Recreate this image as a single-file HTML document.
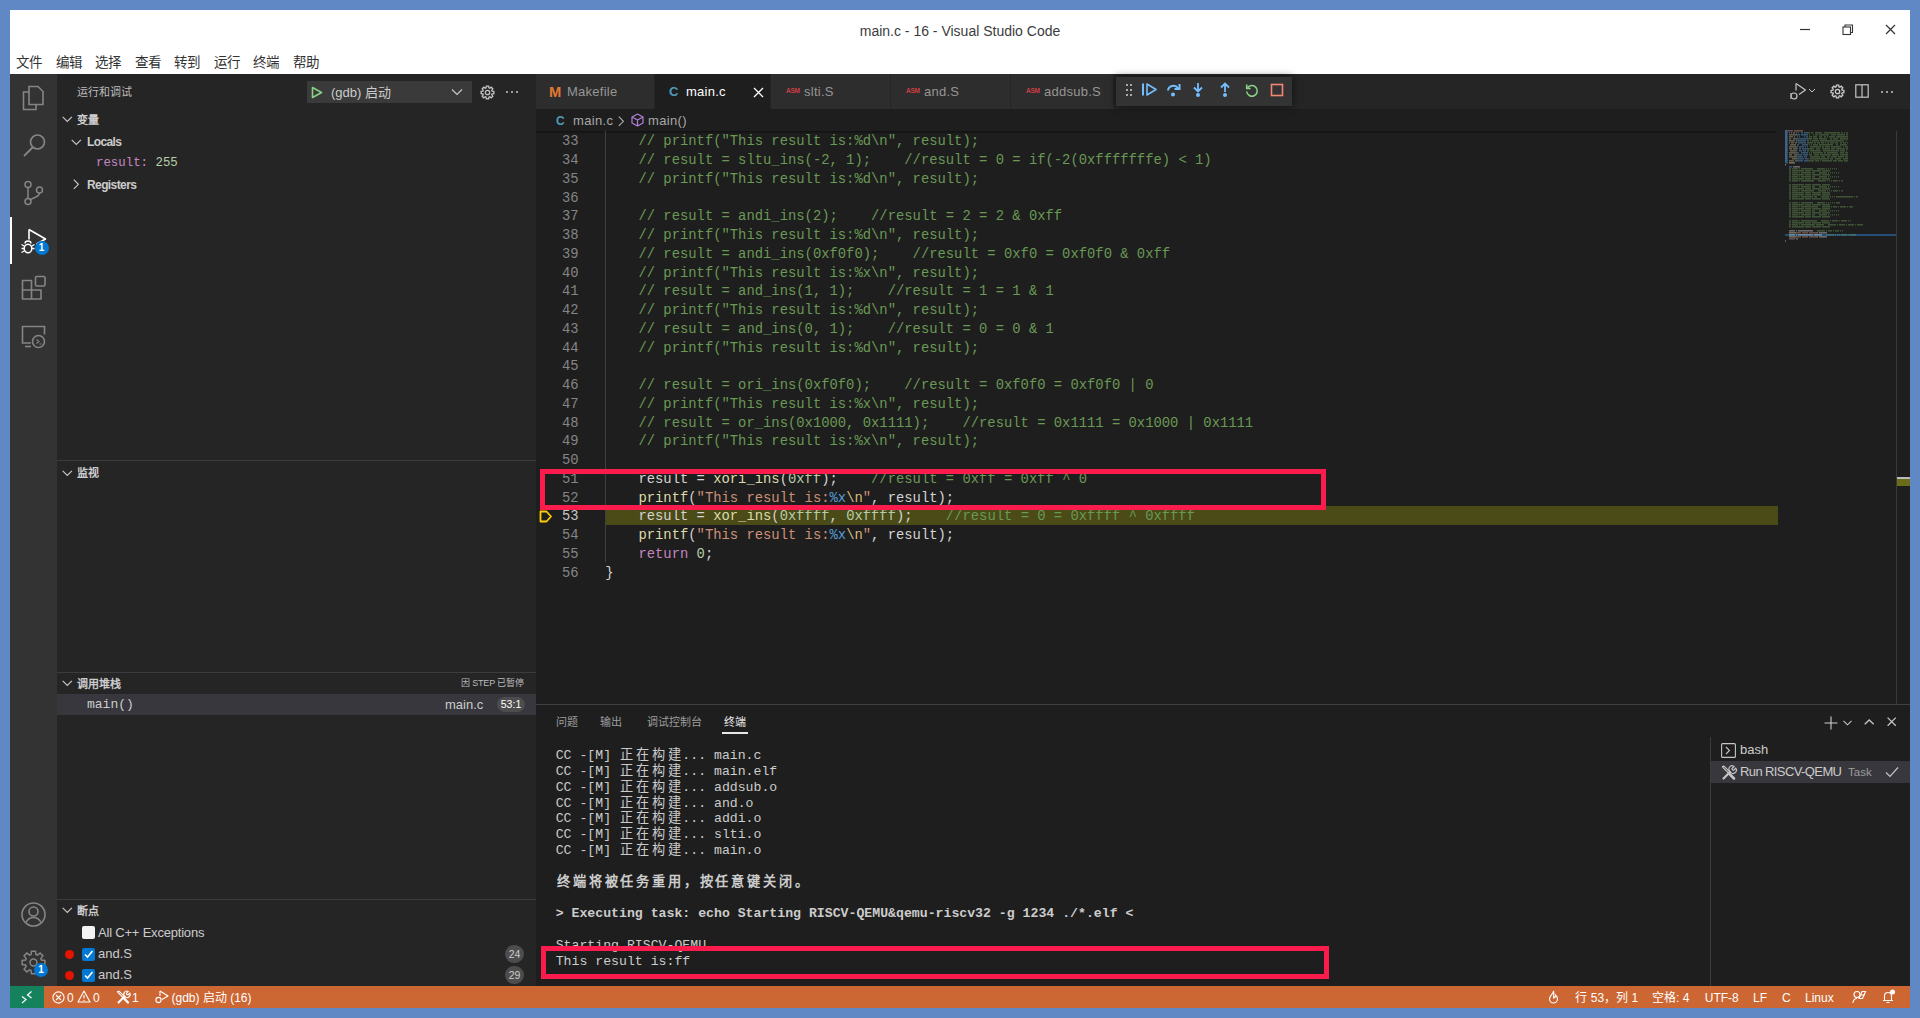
<!DOCTYPE html><html lang="zh-CN"><head><meta charset="utf-8"><title>vscode</title><style>
*{margin:0;padding:0;box-sizing:border-box}
html,body{width:1920px;height:1018px;overflow:hidden;background:#6088c4;font-family:"Liberation Sans",sans-serif;color:#ccc}
.a{position:absolute}
.t{position:absolute;white-space:pre}
.mono{font-family:"Liberation Mono",monospace}
svg{position:absolute;overflow:visible}
</style></head><body>
<div class="a" style="left:10px;top:10px;width:1900px;height:64px;background:#ffffff;"></div>
<div class="a" style="left:10px;top:74px;width:1900px;height:912px;background:#1e1e1e;"></div>
<div class="t" style="left:0px;top:23px;font-size:14px;line-height:16px;color:#3c3c3c;width:1920px;text-align:center;">main.c - 16 - Visual Studio Code</div>
<svg style="left:1799px;top:24px" width="14" height="14"><path d="M1 5.5h10" stroke="#333" stroke-width="1.2"/></svg>
<svg style="left:1842px;top:24px" width="14" height="14"><rect x="1" y="3" width="7.5" height="7.5" fill="none" stroke="#333" stroke-width="1.1"/><path d="M3 3V1h7.5v7.5H8.5" fill="none" stroke="#333" stroke-width="1.1"/></svg>
<svg style="left:1885px;top:24px" width="14" height="14"><path d="M1 1l9 9M10 1l-9 9" stroke="#333" stroke-width="1.2"/></svg>
<div class="t" style="left:16.0px;top:55px;font-size:13.5px;line-height:15px;color:#333;">文件</div>
<div class="t" style="left:55.5px;top:55px;font-size:13.5px;line-height:15px;color:#333;">编辑</div>
<div class="t" style="left:95.0px;top:55px;font-size:13.5px;line-height:15px;color:#333;">选择</div>
<div class="t" style="left:134.5px;top:55px;font-size:13.5px;line-height:15px;color:#333;">查看</div>
<div class="t" style="left:174.0px;top:55px;font-size:13.5px;line-height:15px;color:#333;">转到</div>
<div class="t" style="left:213.5px;top:55px;font-size:13.5px;line-height:15px;color:#333;">运行</div>
<div class="t" style="left:253.0px;top:55px;font-size:13.5px;line-height:15px;color:#333;">终端</div>
<div class="t" style="left:292.5px;top:55px;font-size:13.5px;line-height:15px;color:#333;">帮助</div>
<div class="a" style="left:10px;top:74px;width:47px;height:912px;background:#333333;"></div>
<div class="a" style="left:10px;top:217px;width:2px;height:47px;background:#ffffff;"></div>
<div class="a" style="left:57px;top:74px;width:479px;height:912px;background:#252526;"></div>
<div class="a" style="left:536px;top:74px;width:1374px;height:35px;background:#252526;"></div>
<svg style="left:21px;top:85px" width="24" height="26" viewBox="0 0 24 26"><path d="M8 1.5h9l5 5v13H8z" fill="none" stroke="#858585" stroke-width="1.6"/><path d="M8 7H2.5v17.5H15V19.5" fill="none" stroke="#858585" stroke-width="1.6"/></svg>
<svg style="left:22px;top:132px" width="24" height="26" viewBox="0 0 24 26"><circle cx="15.5" cy="10" r="7" fill="none" stroke="#858585" stroke-width="1.7"/><path d="M10.5 15.5L2 24" stroke="#858585" stroke-width="1.8"/></svg>
<svg style="left:22px;top:180px" width="24" height="26" viewBox="0 0 24 26"><circle cx="6" cy="4.5" r="3" fill="none" stroke="#858585" stroke-width="1.5"/><circle cx="6" cy="21.5" r="3" fill="none" stroke="#858585" stroke-width="1.5"/><circle cx="17.5" cy="10" r="3" fill="none" stroke="#858585" stroke-width="1.5"/><path d="M6 7.5v11M17.5 13c0 4-5 4-10 7" fill="none" stroke="#858585" stroke-width="1.5"/></svg>
<svg style="left:19px;top:228px" width="28" height="28" viewBox="0 0 28 28"><path d="M10 1.5l16.5 9.5-9 5" fill="none" stroke="#fff" stroke-width="1.6" stroke-linejoin="round"/><path d="M10 1.5v10" fill="none" stroke="#fff" stroke-width="1.6"/><ellipse cx="9" cy="20.5" rx="3.8" ry="4.3" fill="none" stroke="#fff" stroke-width="1.5"/><path d="M6 15.5a3 2.5 0 0 1 6 0" fill="none" stroke="#fff" stroke-width="1.4"/><path d="M2.5 16.5l2.7 1.5M2.5 20.5h2.7M2.5 24.5l2.7-1.5M15.5 16.5l-2.7 1.5M15.5 20.5h-2.7" stroke="#fff" stroke-width="1.3"/></svg>
<div class="a" style="left:34.5px;top:241px;width:14px;height:14px;border-radius:7px;background:#0078d4;color:#fff;font-size:10px;line-height:14px;text-align:center;font-weight:bold">1</div>
<svg style="left:21px;top:275px" width="26" height="26" viewBox="0 0 26 26"><path d="M1.5 5.5h9v9.5h9.5v9H1.5z M1.5 15h9v9" fill="none" stroke="#858585" stroke-width="1.6" stroke-linejoin="round"/><rect x="14.5" y="1.5" width="9.5" height="9.5" rx="1.2" fill="none" stroke="#858585" stroke-width="1.6"/></svg>
<svg style="left:21px;top:324px" width="26" height="26" viewBox="0 0 26 26"><path d="M10 19H1.5V2.5h22v8" fill="none" stroke="#858585" stroke-width="1.6"/><path d="M4 22.5h6" stroke="#858585" stroke-width="1.6"/><circle cx="17.5" cy="17.5" r="6" fill="none" stroke="#858585" stroke-width="1.6"/><path d="M15.5 15.5l2.5 2-2.5 2M18.5 20h2" fill="none" stroke="#858585" stroke-width="1.1"/></svg>
<svg style="left:21px;top:902px" width="26" height="26" viewBox="0 0 26 26"><circle cx="12.5" cy="12.5" r="11.5" fill="none" stroke="#858585" stroke-width="1.6"/><circle cx="12.5" cy="9.5" r="4.5" fill="none" stroke="#858585" stroke-width="1.6"/><path d="M5 20.5c2-4 5-5 7.5-5s5.5 1 7.5 5" fill="none" stroke="#858585" stroke-width="1.6"/></svg>
<svg style="left:21.5px;top:950.5px" width="23" height="23"><path d="M22.82 9.48L22.82 13.52L19.42 13.90L18.80 15.40L20.93 18.08L18.08 20.93L15.40 18.80L13.90 19.42L13.52 22.82L9.48 22.82L9.10 19.42L7.60 18.80L4.92 20.93L2.07 18.08L4.20 15.40L3.58 13.90L0.18 13.52L0.18 9.48L3.58 9.10L4.20 7.60L2.07 4.92L4.92 2.07L7.60 4.20L9.10 3.58L9.48 0.18L13.52 0.18L13.90 3.58L15.40 4.20L18.08 2.07L20.93 4.92L18.80 7.60L19.42 9.10Z" fill="none" stroke="#858585" stroke-width="1.5" stroke-linejoin="miter"/><circle cx="11.5" cy="11.5" r="3.45" fill="none" stroke="#858585" stroke-width="1.5"/></svg>
<div class="a" style="left:34px;top:963px;width:14px;height:14px;border-radius:7px;background:#0078d4;color:#fff;font-size:10px;line-height:14px;text-align:center;font-weight:bold">1</div>
<div class="t" style="left:77px;top:86px;font-size:11px;line-height:13px;color:#bbbbbb;">运行和调试</div>
<div class="a" style="left:307px;top:81px;width:165px;height:22px;background:#3a3a3a;"></div>
<svg style="left:311px;top:86px" width="12" height="13"><path d="M1.5 1.5l9 5-9 5z" fill="none" stroke="#89d185" stroke-width="1.6" stroke-linejoin="round"/></svg>
<div class="t" style="left:331px;top:84.6px;font-size:13px;line-height:16px;color:#cccccc;">(gdb) 启动</div>
<svg style="left:451px;top:88px" width="12" height="8"><path d="M1 1.5l5 5 5-5" fill="none" stroke="#c5c5c5" stroke-width="1.2"/></svg>
<svg style="left:480.5px;top:85.5px" width="13" height="13"><path d="M12.90 5.36L12.90 7.64L11.10 7.90L10.74 8.77L11.83 10.22L10.22 11.83L8.77 10.74L7.90 11.10L7.64 12.90L5.36 12.90L5.10 11.10L4.23 10.74L2.78 11.83L1.17 10.22L2.26 8.77L1.90 7.90L0.10 7.64L0.10 5.36L1.90 5.10L2.26 4.23L1.17 2.78L2.78 1.17L4.23 2.26L5.10 1.90L5.36 0.10L7.64 0.10L7.90 1.90L8.77 2.26L10.22 1.17L11.83 2.78L10.74 4.23L11.10 5.10Z" fill="none" stroke="#c5c5c5" stroke-width="1.3" stroke-linejoin="miter"/><circle cx="6.5" cy="6.5" r="2.21" fill="none" stroke="#c5c5c5" stroke-width="1.3"/></svg>
<div class="a" style="left:506px;top:91px;width:2px;height:2px;background:#c5c5c5;border-radius:1px"></div>
<div class="a" style="left:511px;top:91px;width:2px;height:2px;background:#c5c5c5;border-radius:1px"></div>
<div class="a" style="left:516px;top:91px;width:2px;height:2px;background:#c5c5c5;border-radius:1px"></div>
<svg style="left:62px;top:116px" width="11" height="7"><path d="M0.7 0.8l4.6 4.6 4.6-4.6" fill="none" stroke="#c5c5c5" stroke-width="1.2"/></svg>
<div class="t" style="left:77px;top:114px;font-size:11px;line-height:13px;color:#cccccc;font-weight:bold">变量</div>
<svg style="left:71px;top:139px" width="11" height="7"><path d="M0.7 0.8l4.6 4.6 4.6-4.6" fill="none" stroke="#c5c5c5" stroke-width="1.2"/></svg>
<div class="t" style="left:87px;top:134.6px;font-size:12px;line-height:14px;color:#cccccc;font-weight:bold;letter-spacing:-0.6px">Locals</div>
<div class="t mono" style="left:96px;top:155.6px;font-size:12.4px;line-height:15px;color:#cccccc;"><span style="color:#c586c0">result:</span> <span style="color:#b5cea8">255</span></div>
<svg style="left:73px;top:179px" width="7" height="11"><path d="M0.8 0.7l4.6 4.6-4.6 4.6" fill="none" stroke="#c5c5c5" stroke-width="1.2"/></svg>
<div class="t" style="left:87px;top:177.6px;font-size:12px;line-height:15px;color:#cccccc;font-weight:bold;letter-spacing:-0.6px">Registers</div>
<div class="a" style="left:57px;top:460px;width:479px;height:1px;background:#3c3c3c;"></div>
<svg style="left:62px;top:470px" width="11" height="7"><path d="M0.7 0.8l4.6 4.6 4.6-4.6" fill="none" stroke="#c5c5c5" stroke-width="1.2"/></svg>
<div class="t" style="left:77px;top:466.5px;font-size:11px;line-height:13px;color:#cccccc;font-weight:bold">监视</div>
<div class="a" style="left:57px;top:672px;width:479px;height:1px;background:#3c3c3c;"></div>
<svg style="left:62px;top:680px" width="11" height="7"><path d="M0.7 0.8l4.6 4.6 4.6-4.6" fill="none" stroke="#c5c5c5" stroke-width="1.2"/></svg>
<div class="t" style="left:77px;top:678px;font-size:11px;line-height:13px;color:#cccccc;font-weight:bold">调用堆栈</div>
<div class="t" style="left:400px;top:677px;font-size:9px;line-height:12px;color:#bbbbbb;width:123.5px;text-align:right;letter-spacing:-0.2px">因 STEP 已暂停</div>
<div class="a" style="left:57px;top:694px;width:479px;height:21px;background:#37373d;"></div>
<div class="t mono" style="left:87px;top:697px;font-size:13px;line-height:15px;color:#cccccc;">main()</div>
<div class="t" style="left:445px;top:697px;font-size:13px;line-height:15px;color:#cccccc;">main.c</div>
<div class="a" style="left:497px;top:697px;width:28px;height:15px;background:#4d4d4d;border-radius:8px"></div>
<div class="t" style="left:497px;top:698px;font-size:10.5px;line-height:13px;color:#fff;width:28px;text-align:center;">53:1</div>
<div class="a" style="left:57px;top:899px;width:479px;height:1px;background:#3c3c3c;"></div>
<svg style="left:62px;top:907px" width="11" height="7"><path d="M0.7 0.8l4.6 4.6 4.6-4.6" fill="none" stroke="#c5c5c5" stroke-width="1.2"/></svg>
<div class="t" style="left:77px;top:905px;font-size:11px;line-height:13px;color:#cccccc;font-weight:bold">断点</div>
<div class="a" style="left:82px;top:926px;width:13px;height:13px;background:#f3f3f3;border-radius:2px"></div>
<div class="t" style="left:98px;top:925px;font-size:13px;line-height:15px;color:#cccccc;letter-spacing:-0.2px">All C++ Exceptions</div>
<div class="a" style="left:65px;top:950px;width:9px;height:9px;background:#e51400;border-radius:5px"></div>
<div class="a" style="left:82px;top:948px;width:13px;height:13px;background:#0078d4;border-radius:2px"></div>
<svg style="left:83px;top:949px" width="11" height="11"><path d="M2 5.5l2.5 2.5 5-6" fill="none" stroke="#fff" stroke-width="1.6"/></svg>
<div class="t" style="left:98px;top:946px;font-size:13px;line-height:16px;color:#cccccc;">and.S</div>
<div class="a" style="left:505px;top:945px;width:19px;height:18px;background:#4d4d4d;border-radius:9px"></div>
<div class="t" style="left:505px;top:947px;font-size:10.5px;line-height:14px;color:#ccc;width:19px;text-align:center;">24</div>
<div class="a" style="left:65px;top:971px;width:9px;height:9px;background:#e51400;border-radius:5px"></div>
<div class="a" style="left:82px;top:969px;width:13px;height:13px;background:#0078d4;border-radius:2px"></div>
<svg style="left:83px;top:970px" width="11" height="11"><path d="M2 5.5l2.5 2.5 5-6" fill="none" stroke="#fff" stroke-width="1.6"/></svg>
<div class="t" style="left:98px;top:967px;font-size:13px;line-height:16px;color:#cccccc;">and.S</div>
<div class="a" style="left:505px;top:966px;width:19px;height:18px;background:#4d4d4d;border-radius:9px"></div>
<div class="t" style="left:505px;top:968px;font-size:10.5px;line-height:14px;color:#ccc;width:19px;text-align:center;">29</div>
<div class="a" style="left:536px;top:74px;width:118px;height:35px;background:#2d2d2d;"></div>
<div class="t" style="left:548.5px;top:84.5px;font-size:14px;line-height:14px;color:#e37933;font-weight:bold;transform:scaleX(1.05);transform-origin:left">M</div>
<div class="t" style="left:567px;top:84px;font-size:13px;line-height:16px;color:#969696;letter-spacing:0.25px">Makefile</div>
<div class="a" style="left:655px;top:74px;width:115px;height:35px;background:#1e1e1e;"></div>
<div class="t" style="left:669px;top:84.8px;font-size:13px;line-height:14px;color:#519aba;font-weight:bold">C</div>
<div class="t" style="left:686px;top:84px;font-size:13px;line-height:16px;color:#ffffff;letter-spacing:0.25px">main.c</div>
<div class="a" style="left:771px;top:74px;width:119px;height:35px;background:#2d2d2d;"></div>
<div class="t" style="left:786px;top:87px;font-size:6.5px;line-height:8px;color:#cc3e44;font-weight:bold;letter-spacing:-0.3px">ASM</div>
<div class="t" style="left:804px;top:84px;font-size:13px;line-height:16px;color:#969696;letter-spacing:0.25px">slti.S</div>
<div class="a" style="left:891px;top:74px;width:119px;height:35px;background:#2d2d2d;"></div>
<div class="t" style="left:906px;top:87px;font-size:6.5px;line-height:8px;color:#cc3e44;font-weight:bold;letter-spacing:-0.3px">ASM</div>
<div class="t" style="left:924px;top:84px;font-size:13px;line-height:16px;color:#969696;letter-spacing:0.25px">and.S</div>
<div class="a" style="left:1011px;top:74px;width:102px;height:35px;background:#2d2d2d;"></div>
<div class="t" style="left:1026px;top:87px;font-size:6.5px;line-height:8px;color:#cc3e44;font-weight:bold;letter-spacing:-0.3px">ASM</div>
<div class="t" style="left:1044px;top:84px;font-size:13px;line-height:16px;color:#969696;letter-spacing:0.25px">addsub.S</div>
<svg style="left:752.5px;top:86.5px" width="12" height="12"><path d="M1 1l9 9M10 1L1 10" stroke="#fff" stroke-width="1.3"/></svg>
<div class="a" style="left:1116px;top:77px;width:176px;height:29px;background:#333333;box-shadow:0 0 8px rgba(0,0,0,0.6)"></div>
<div class="a" style="left:1126px;top:84px;width:2px;height:2px;background:#aaa;"></div>
<div class="a" style="left:1130px;top:84px;width:2px;height:2px;background:#aaa;"></div>
<div class="a" style="left:1126px;top:89px;width:2px;height:2px;background:#aaa;"></div>
<div class="a" style="left:1130px;top:89px;width:2px;height:2px;background:#aaa;"></div>
<div class="a" style="left:1126px;top:94px;width:2px;height:2px;background:#aaa;"></div>
<div class="a" style="left:1130px;top:94px;width:2px;height:2px;background:#aaa;"></div>
<svg style="left:1141px;top:82px" width="18" height="16"><path d="M2 1.5v12" stroke="#75beff" stroke-width="2"/><path d="M6 2l9 5.5-9 5.5z" fill="none" stroke="#75beff" stroke-width="1.6" stroke-linejoin="round"/></svg>
<svg style="left:1166px;top:82px" width="16" height="16"><path d="M2 8.5a5.5 5 0 0 1 10-2.5" fill="none" stroke="#75beff" stroke-width="2"/><path d="M13.5 2v5h-5" fill="none" stroke="#75beff" stroke-width="2"/><circle cx="7" cy="12.5" r="2" fill="#75beff"/></svg>
<svg style="left:1191px;top:82px" width="14" height="16"><path d="M7 1v8M3 5.5l4 4 4-4" fill="none" stroke="#75beff" stroke-width="1.8"/><circle cx="7" cy="13" r="2" fill="#75beff"/></svg>
<svg style="left:1218px;top:82px" width="14" height="16"><path d="M7 10V2M3 5.5l4-4 4 4" fill="none" stroke="#75beff" stroke-width="1.8"/><circle cx="7" cy="13" r="2" fill="#75beff"/></svg>
<svg style="left:1244px;top:83px" width="16" height="16"><path d="M3.5 5A5.3 5.3 0 1 1 2.7 8.5" fill="none" stroke="#89d185" stroke-width="1.6"/><path d="M2.7 1.5v4h4" fill="none" stroke="#89d185" stroke-width="1.6"/></svg>
<svg style="left:1270px;top:83px" width="14" height="14"><rect x="1.5" y="1.5" width="11" height="11" fill="none" stroke="#f48771" stroke-width="1.6"/></svg>
<svg style="left:1789px;top:82px" width="30" height="20"><path d="M7 1.5l9.5 6.5-6.5 4.5" fill="none" stroke="#c5c5c5" stroke-width="1.2" stroke-linejoin="round"/><path d="M7 1.5v7" stroke="#c5c5c5" stroke-width="1.2"/><circle cx="5" cy="14" r="3" fill="none" stroke="#c5c5c5" stroke-width="1.2"/><path d="M1 11.5l2 1M1 14h1.5M1 16.5l2-1" stroke="#c5c5c5" stroke-width="1"/><path d="M20 7l3 3 3-3" fill="none" stroke="#c5c5c5" stroke-width="1"/></svg>
<svg style="left:1830.5px;top:84.5px" width="13" height="13"><path d="M12.90 5.36L12.90 7.64L11.10 7.90L10.74 8.77L11.83 10.22L10.22 11.83L8.77 10.74L7.90 11.10L7.64 12.90L5.36 12.90L5.10 11.10L4.23 10.74L2.78 11.83L1.17 10.22L2.26 8.77L1.90 7.90L0.10 7.64L0.10 5.36L1.90 5.10L2.26 4.23L1.17 2.78L2.78 1.17L4.23 2.26L5.10 1.90L5.36 0.10L7.64 0.10L7.90 1.90L8.77 2.26L10.22 1.17L11.83 2.78L10.74 4.23L11.10 5.10Z" fill="none" stroke="#cccccc" stroke-width="1.3" stroke-linejoin="miter"/><circle cx="6.5" cy="6.5" r="2.21" fill="none" stroke="#cccccc" stroke-width="1.3"/></svg>
<svg style="left:1855px;top:84px" width="14" height="14"><rect x="0.8" y="0.8" width="12.4" height="12.4" fill="none" stroke="#c5c5c5" stroke-width="1.2"/><path d="M7 1v12" stroke="#c5c5c5" stroke-width="1.2"/></svg>
<div class="a" style="left:1881px;top:91px;width:2px;height:2px;background:#c5c5c5;border-radius:1px"></div>
<div class="a" style="left:1886px;top:91px;width:2px;height:2px;background:#c5c5c5;border-radius:1px"></div>
<div class="a" style="left:1891px;top:91px;width:2px;height:2px;background:#c5c5c5;border-radius:1px"></div>
<div class="t" style="left:556px;top:113.5px;font-size:12px;line-height:14px;color:#519aba;font-weight:bold">C</div>
<div class="t" style="left:573px;top:112.5px;font-size:13px;line-height:16px;color:#a9a9a9;letter-spacing:0.35px">main.c</div>
<svg style="left:618px;top:115.5px" width="7" height="11"><path d="M0.8 0.7l4.6 4.6-4.6 4.6" fill="none" stroke="#a9a9a9" stroke-width="1.2"/></svg>
<svg style="left:631px;top:113px" width="14" height="14"><path d="M6.5 1l5.5 3v6l-5.5 3L1 10V4z M1 4l5.5 3 5.5-3 M6.5 7v6" fill="none" stroke="#b180d7" stroke-width="1.2" stroke-linejoin="round"/></svg>
<div class="t" style="left:648px;top:112.5px;font-size:13px;line-height:16px;color:#a9a9a9;letter-spacing:0.35px">main()</div>
<div class="a" style="left:536px;top:131px;width:1240px;height:3px;background:linear-gradient(rgba(0,0,0,0.45),rgba(0,0,0,0));"></div>
<div class="a" style="left:605px;top:506.0px;width:1173px;height:18.75px;background:#4b4b18;"></div>
<div class="a" style="left:605px;top:131px;width:1px;height:431.25px;background:#404040;"></div>
<div class="t mono" style="left:540px;top:132.25px;width:38.5px;text-align:right;font-size:13.85px;line-height:18.75px;color:#858585">33</div>
<div class="t mono" style="left:605.2px;top:132.25px;font-size:13.85px;line-height:18.75px;color:#d4d4d4"><span style="color:#6a9955">    // printf(&quot;This result is:%d\n&quot;, result);</span></div>
<div class="t mono" style="left:540px;top:151.0px;width:38.5px;text-align:right;font-size:13.85px;line-height:18.75px;color:#858585">34</div>
<div class="t mono" style="left:605.2px;top:151.0px;font-size:13.85px;line-height:18.75px;color:#d4d4d4"><span style="color:#6a9955">    // result = sltu_ins(-2, 1);    //result = 0 = if(-2(0xfffffffe) &lt; 1)</span></div>
<div class="t mono" style="left:540px;top:169.75px;width:38.5px;text-align:right;font-size:13.85px;line-height:18.75px;color:#858585">35</div>
<div class="t mono" style="left:605.2px;top:169.75px;font-size:13.85px;line-height:18.75px;color:#d4d4d4"><span style="color:#6a9955">    // printf(&quot;This result is:%d\n&quot;, result);</span></div>
<div class="t mono" style="left:540px;top:188.5px;width:38.5px;text-align:right;font-size:13.85px;line-height:18.75px;color:#858585">36</div>
<div class="t mono" style="left:540px;top:207.25px;width:38.5px;text-align:right;font-size:13.85px;line-height:18.75px;color:#858585">37</div>
<div class="t mono" style="left:605.2px;top:207.25px;font-size:13.85px;line-height:18.75px;color:#d4d4d4"><span style="color:#6a9955">    // result = andi_ins(2);    //result = 2 = 2 &amp; 0xff</span></div>
<div class="t mono" style="left:540px;top:226.0px;width:38.5px;text-align:right;font-size:13.85px;line-height:18.75px;color:#858585">38</div>
<div class="t mono" style="left:605.2px;top:226.0px;font-size:13.85px;line-height:18.75px;color:#d4d4d4"><span style="color:#6a9955">    // printf(&quot;This result is:%d\n&quot;, result);</span></div>
<div class="t mono" style="left:540px;top:244.75px;width:38.5px;text-align:right;font-size:13.85px;line-height:18.75px;color:#858585">39</div>
<div class="t mono" style="left:605.2px;top:244.75px;font-size:13.85px;line-height:18.75px;color:#d4d4d4"><span style="color:#6a9955">    // result = andi_ins(0xf0f0);    //result = 0xf0 = 0xf0f0 &amp; 0xff</span></div>
<div class="t mono" style="left:540px;top:263.5px;width:38.5px;text-align:right;font-size:13.85px;line-height:18.75px;color:#858585">40</div>
<div class="t mono" style="left:605.2px;top:263.5px;font-size:13.85px;line-height:18.75px;color:#d4d4d4"><span style="color:#6a9955">    // printf(&quot;This result is:%x\n&quot;, result);</span></div>
<div class="t mono" style="left:540px;top:282.25px;width:38.5px;text-align:right;font-size:13.85px;line-height:18.75px;color:#858585">41</div>
<div class="t mono" style="left:605.2px;top:282.25px;font-size:13.85px;line-height:18.75px;color:#d4d4d4"><span style="color:#6a9955">    // result = and_ins(1, 1);    //result = 1 = 1 &amp; 1</span></div>
<div class="t mono" style="left:540px;top:301.0px;width:38.5px;text-align:right;font-size:13.85px;line-height:18.75px;color:#858585">42</div>
<div class="t mono" style="left:605.2px;top:301.0px;font-size:13.85px;line-height:18.75px;color:#d4d4d4"><span style="color:#6a9955">    // printf(&quot;This result is:%d\n&quot;, result);</span></div>
<div class="t mono" style="left:540px;top:319.75px;width:38.5px;text-align:right;font-size:13.85px;line-height:18.75px;color:#858585">43</div>
<div class="t mono" style="left:605.2px;top:319.75px;font-size:13.85px;line-height:18.75px;color:#d4d4d4"><span style="color:#6a9955">    // result = and_ins(0, 1);    //result = 0 = 0 &amp; 1</span></div>
<div class="t mono" style="left:540px;top:338.5px;width:38.5px;text-align:right;font-size:13.85px;line-height:18.75px;color:#858585">44</div>
<div class="t mono" style="left:605.2px;top:338.5px;font-size:13.85px;line-height:18.75px;color:#d4d4d4"><span style="color:#6a9955">    // printf(&quot;This result is:%d\n&quot;, result);</span></div>
<div class="t mono" style="left:540px;top:357.25px;width:38.5px;text-align:right;font-size:13.85px;line-height:18.75px;color:#858585">45</div>
<div class="t mono" style="left:540px;top:376.0px;width:38.5px;text-align:right;font-size:13.85px;line-height:18.75px;color:#858585">46</div>
<div class="t mono" style="left:605.2px;top:376.0px;font-size:13.85px;line-height:18.75px;color:#d4d4d4"><span style="color:#6a9955">    // result = ori_ins(0xf0f0);    //result = 0xf0f0 = 0xf0f0 | 0</span></div>
<div class="t mono" style="left:540px;top:394.75px;width:38.5px;text-align:right;font-size:13.85px;line-height:18.75px;color:#858585">47</div>
<div class="t mono" style="left:605.2px;top:394.75px;font-size:13.85px;line-height:18.75px;color:#d4d4d4"><span style="color:#6a9955">    // printf(&quot;This result is:%x\n&quot;, result);</span></div>
<div class="t mono" style="left:540px;top:413.5px;width:38.5px;text-align:right;font-size:13.85px;line-height:18.75px;color:#858585">48</div>
<div class="t mono" style="left:605.2px;top:413.5px;font-size:13.85px;line-height:18.75px;color:#d4d4d4"><span style="color:#6a9955">    // result = or_ins(0x1000, 0x1111);    //result = 0x1111 = 0x1000 | 0x1111</span></div>
<div class="t mono" style="left:540px;top:432.25px;width:38.5px;text-align:right;font-size:13.85px;line-height:18.75px;color:#858585">49</div>
<div class="t mono" style="left:605.2px;top:432.25px;font-size:13.85px;line-height:18.75px;color:#d4d4d4"><span style="color:#6a9955">    // printf(&quot;This result is:%x\n&quot;, result);</span></div>
<div class="t mono" style="left:540px;top:451.0px;width:38.5px;text-align:right;font-size:13.85px;line-height:18.75px;color:#858585">50</div>
<div class="t mono" style="left:540px;top:469.75px;width:38.5px;text-align:right;font-size:13.85px;line-height:18.75px;color:#858585">51</div>
<div class="t mono" style="left:605.2px;top:469.75px;font-size:13.85px;line-height:18.75px;color:#d4d4d4"><span style="color:#d4d4d4">    result = </span><span style="color:#dcdcaa">xori_ins</span><span style="color:#d4d4d4">(</span><span style="color:#b5cea8">0xff</span><span style="color:#d4d4d4">);    </span><span style="color:#6a9955">//result = 0xff = 0xff ^ 0</span></div>
<div class="t mono" style="left:540px;top:488.5px;width:38.5px;text-align:right;font-size:13.85px;line-height:18.75px;color:#858585">52</div>
<div class="t mono" style="left:605.2px;top:488.5px;font-size:13.85px;line-height:18.75px;color:#d4d4d4"><span style="color:#d4d4d4">    </span><span style="color:#dcdcaa">printf</span><span style="color:#d4d4d4">(</span><span style="color:#ce9178">&quot;This result is:</span><span style="color:#569cd6">%x</span><span style="color:#d7ba7d">\n</span><span style="color:#ce9178">&quot;</span><span style="color:#d4d4d4">, result);</span></div>
<div class="t mono" style="left:540px;top:507.25px;width:38.5px;text-align:right;font-size:13.85px;line-height:18.75px;color:#c6c6c6">53</div>
<div class="t mono" style="left:605.2px;top:507.25px;font-size:13.85px;line-height:18.75px;color:#d4d4d4"><span style="color:#d4d4d4">    result = </span><span style="color:#dcdcaa">xor_ins</span><span style="color:#d4d4d4">(</span><span style="color:#b5cea8">0xffff</span><span style="color:#d4d4d4">, </span><span style="color:#b5cea8">0xffff</span><span style="color:#d4d4d4">);    </span><span style="color:#6a9955">//result = 0 = 0xffff ^ 0xffff</span></div>
<div class="t mono" style="left:540px;top:526.0px;width:38.5px;text-align:right;font-size:13.85px;line-height:18.75px;color:#858585">54</div>
<div class="t mono" style="left:605.2px;top:526.0px;font-size:13.85px;line-height:18.75px;color:#d4d4d4"><span style="color:#d4d4d4">    </span><span style="color:#dcdcaa">printf</span><span style="color:#d4d4d4">(</span><span style="color:#ce9178">&quot;This result is:</span><span style="color:#569cd6">%x</span><span style="color:#d7ba7d">\n</span><span style="color:#ce9178">&quot;</span><span style="color:#d4d4d4">, result);</span></div>
<div class="t mono" style="left:540px;top:544.75px;width:38.5px;text-align:right;font-size:13.85px;line-height:18.75px;color:#858585">55</div>
<div class="t mono" style="left:605.2px;top:544.75px;font-size:13.85px;line-height:18.75px;color:#d4d4d4"><span style="color:#d4d4d4">    </span><span style="color:#c586c0">return</span><span style="color:#d4d4d4"> </span><span style="color:#b5cea8">0</span><span style="color:#d4d4d4">;</span></div>
<div class="t mono" style="left:540px;top:563.5px;width:38.5px;text-align:right;font-size:13.85px;line-height:18.75px;color:#858585">56</div>
<div class="t mono" style="left:605.2px;top:563.5px;font-size:13.85px;line-height:18.75px;color:#d4d4d4"><span style="color:#d4d4d4">}</span></div>
<svg style="left:539px;top:510.0px" width="14" height="13"><path d="M1.5 1.5h6l4.5 5-4.5 5h-6z" fill="none" stroke="#ffcc00" stroke-width="1.8" stroke-linejoin="round"/></svg>
<div class="a" style="left:1896px;top:131px;width:1px;height:573px;background:#3a3a3a;"></div>
<div class="a" style="left:1897px;top:477px;width:13px;height:2px;background:#bbbbbb;"></div>
<div class="a" style="left:1897px;top:479px;width:13px;height:7px;background:#6b6b1a;"></div>
<div class="a" style="left:1785px;top:233.5px;width:111px;height:2.5px;background:#264f78"></div>
<svg style="left:1785px;top:130px;opacity:0.42" width="112" height="120"><rect x="0" y="0" width="8" height="1.6" fill="#c586c0"/><rect x="9" y="0" width="9" height="1.6" fill="#ce9178"/><rect x="0" y="2" width="3" height="1.6" fill="#569cd6"/><rect x="4" y="2" width="1" height="1.6" fill="#b8b088"/><rect x="6" y="2" width="1" height="1.6" fill="#b8b088"/><rect x="8" y="2" width="2" height="1.6" fill="#b8b088"/><rect x="11" y="2" width="1" height="1.6" fill="#b8b088"/><rect x="13" y="2" width="1" height="1.6" fill="#569cd6"/><rect x="16" y="2" width="2" height="1.6" fill="#569cd6"/><rect x="19" y="2" width="4" height="1.6" fill="#569cd6"/><rect x="23" y="2" width="2" height="1.6" fill="#6a9955"/><rect x="26" y="2" width="2" height="1.6" fill="#6a9955"/><rect x="30" y="2" width="7" height="1.6" fill="#6a9955"/><rect x="39" y="2" width="16" height="1.6" fill="#6a9955"/><rect x="56" y="2" width="2" height="1.6" fill="#6a9955"/><rect x="59" y="2" width="1" height="1.6" fill="#6a9955"/><rect x="61" y="2" width="2" height="1.6" fill="#6a9955"/><rect x="0" y="4" width="3" height="1.6" fill="#569cd6"/><rect x="4" y="4" width="8" height="1.6" fill="#b8b088"/><rect x="12" y="4" width="3" height="1.6" fill="#569cd6"/><rect x="16" y="4" width="7" height="1.6" fill="#569cd6"/><rect x="24" y="4" width="1" height="1.6" fill="#6a9955"/><rect x="28" y="4" width="1" height="1.6" fill="#6a9955"/><rect x="30" y="4" width="3" height="1.6" fill="#6a9955"/><rect x="34" y="4" width="10" height="1.6" fill="#6a9955"/><rect x="46" y="4" width="5" height="1.6" fill="#6a9955"/><rect x="52" y="4" width="8" height="1.6" fill="#6a9955"/><rect x="61" y="4" width="2" height="1.6" fill="#6a9955"/><rect x="0" y="6" width="3" height="1.6" fill="#569cd6"/><rect x="4" y="6" width="4" height="1.6" fill="#b8b088"/><rect x="9" y="6" width="1" height="1.6" fill="#b8b088"/><rect x="12" y="6" width="1" height="1.6" fill="#569cd6"/><rect x="14" y="6" width="1" height="1.6" fill="#569cd6"/><rect x="19" y="6" width="1" height="1.6" fill="#569cd6"/><rect x="21" y="6" width="2" height="1.6" fill="#569cd6"/><rect x="24" y="6" width="3" height="1.6" fill="#6a9955"/><rect x="28" y="6" width="4" height="1.6" fill="#6a9955"/><rect x="34" y="6" width="3" height="1.6" fill="#6a9955"/><rect x="39" y="6" width="2" height="1.6" fill="#6a9955"/><rect x="42" y="6" width="1" height="1.6" fill="#6a9955"/><rect x="44" y="6" width="6" height="1.6" fill="#6a9955"/><rect x="51" y="6" width="12" height="1.6" fill="#6a9955"/><rect x="0" y="8" width="3" height="1.6" fill="#569cd6"/><rect x="4" y="8" width="2" height="1.6" fill="#b8b088"/><rect x="8" y="8" width="4" height="1.6" fill="#b8b088"/><rect x="12" y="8" width="11" height="1.6" fill="#569cd6"/><rect x="23" y="8" width="4" height="1.6" fill="#6a9955"/><rect x="28" y="8" width="5" height="1.6" fill="#6a9955"/><rect x="34" y="8" width="8" height="1.6" fill="#6a9955"/><rect x="45" y="8" width="2" height="1.6" fill="#6a9955"/><rect x="48" y="8" width="5" height="1.6" fill="#6a9955"/><rect x="55" y="8" width="8" height="1.6" fill="#6a9955"/><rect x="0" y="10" width="3" height="1.6" fill="#569cd6"/><rect x="4" y="10" width="6" height="1.6" fill="#b8b088"/><rect x="11" y="10" width="1" height="1.6" fill="#b8b088"/><rect x="12" y="10" width="9" height="1.6" fill="#569cd6"/><rect x="22" y="10" width="1" height="1.6" fill="#569cd6"/><rect x="23" y="10" width="1" height="1.6" fill="#6a9955"/><rect x="25" y="10" width="1" height="1.6" fill="#6a9955"/><rect x="27" y="10" width="7" height="1.6" fill="#6a9955"/><rect x="35" y="10" width="24" height="1.6" fill="#6a9955"/><rect x="61" y="10" width="1" height="1.6" fill="#6a9955"/><rect x="0" y="12" width="3" height="1.6" fill="#569cd6"/><rect x="4" y="12" width="1" height="1.6" fill="#b8b088"/><rect x="6" y="12" width="3" height="1.6" fill="#b8b088"/><rect x="10" y="12" width="2" height="1.6" fill="#b8b088"/><rect x="13" y="12" width="8" height="1.6" fill="#569cd6"/><rect x="22" y="12" width="1" height="1.6" fill="#569cd6"/><rect x="23" y="12" width="5" height="1.6" fill="#6a9955"/><rect x="29" y="12" width="2" height="1.6" fill="#6a9955"/><rect x="32" y="12" width="3" height="1.6" fill="#6a9955"/><rect x="36" y="12" width="3" height="1.6" fill="#6a9955"/><rect x="40" y="12" width="1" height="1.6" fill="#6a9955"/><rect x="42" y="12" width="2" height="1.6" fill="#6a9955"/><rect x="45" y="12" width="4" height="1.6" fill="#6a9955"/><rect x="50" y="12" width="3" height="1.6" fill="#6a9955"/><rect x="55" y="12" width="2" height="1.6" fill="#6a9955"/><rect x="58" y="12" width="3" height="1.6" fill="#6a9955"/><rect x="62" y="12" width="1" height="1.6" fill="#6a9955"/><rect x="0" y="14" width="3" height="1.6" fill="#569cd6"/><rect x="5" y="14" width="6" height="1.6" fill="#b8b088"/><rect x="12" y="14" width="2" height="1.6" fill="#569cd6"/><rect x="17" y="14" width="6" height="1.6" fill="#569cd6"/><rect x="24" y="14" width="1" height="1.6" fill="#6a9955"/><rect x="26" y="14" width="1" height="1.6" fill="#6a9955"/><rect x="28" y="14" width="5" height="1.6" fill="#6a9955"/><rect x="34" y="14" width="14" height="1.6" fill="#6a9955"/><rect x="51" y="14" width="2" height="1.6" fill="#6a9955"/><rect x="55" y="14" width="7" height="1.6" fill="#6a9955"/><rect x="0" y="16" width="3" height="1.6" fill="#569cd6"/><rect x="4" y="16" width="8" height="1.6" fill="#b8b088"/><rect x="12" y="16" width="1" height="1.6" fill="#569cd6"/><rect x="14" y="16" width="5" height="1.6" fill="#569cd6"/><rect x="20" y="16" width="1" height="1.6" fill="#569cd6"/><rect x="22" y="16" width="1" height="1.6" fill="#569cd6"/><rect x="25" y="16" width="11" height="1.6" fill="#6a9955"/><rect x="37" y="16" width="2" height="1.6" fill="#6a9955"/><rect x="40" y="16" width="5" height="1.6" fill="#6a9955"/><rect x="46" y="16" width="10" height="1.6" fill="#6a9955"/><rect x="58" y="16" width="1" height="1.6" fill="#6a9955"/><rect x="60" y="16" width="3" height="1.6" fill="#6a9955"/><rect x="0" y="18" width="3" height="1.6" fill="#569cd6"/><rect x="4" y="18" width="3" height="1.6" fill="#b8b088"/><rect x="8" y="18" width="4" height="1.6" fill="#b8b088"/><rect x="12" y="18" width="1" height="1.6" fill="#569cd6"/><rect x="14" y="18" width="2" height="1.6" fill="#569cd6"/><rect x="17" y="18" width="6" height="1.6" fill="#569cd6"/><rect x="23" y="18" width="6" height="1.6" fill="#6a9955"/><rect x="31" y="18" width="4" height="1.6" fill="#6a9955"/><rect x="37" y="18" width="8" height="1.6" fill="#6a9955"/><rect x="46" y="18" width="4" height="1.6" fill="#6a9955"/><rect x="51" y="18" width="9" height="1.6" fill="#6a9955"/><rect x="61" y="18" width="2" height="1.6" fill="#6a9955"/><rect x="0" y="20" width="3" height="1.6" fill="#569cd6"/><rect x="5" y="20" width="7" height="1.6" fill="#b8b088"/><rect x="14" y="20" width="3" height="1.6" fill="#569cd6"/><rect x="18" y="20" width="3" height="1.6" fill="#569cd6"/><rect x="22" y="20" width="1" height="1.6" fill="#569cd6"/><rect x="23" y="20" width="1" height="1.6" fill="#6a9955"/><rect x="25" y="20" width="11" height="1.6" fill="#6a9955"/><rect x="38" y="20" width="16" height="1.6" fill="#6a9955"/><rect x="55" y="20" width="5" height="1.6" fill="#6a9955"/><rect x="61" y="20" width="1" height="1.6" fill="#6a9955"/><rect x="0" y="22" width="3" height="1.6" fill="#569cd6"/><rect x="4" y="22" width="8" height="1.6" fill="#b8b088"/><rect x="12" y="22" width="2" height="1.6" fill="#569cd6"/><rect x="16" y="22" width="7" height="1.6" fill="#569cd6"/><rect x="24" y="22" width="1" height="1.6" fill="#6a9955"/><rect x="26" y="22" width="1" height="1.6" fill="#6a9955"/><rect x="28" y="22" width="10" height="1.6" fill="#6a9955"/><rect x="39" y="22" width="2" height="1.6" fill="#6a9955"/><rect x="42" y="22" width="11" height="1.6" fill="#6a9955"/><rect x="55" y="22" width="4" height="1.6" fill="#6a9955"/><rect x="60" y="22" width="3" height="1.6" fill="#6a9955"/><rect x="0" y="24" width="3" height="1.6" fill="#569cd6"/><rect x="4" y="24" width="3" height="1.6" fill="#b8b088"/><rect x="9" y="24" width="3" height="1.6" fill="#b8b088"/><rect x="12" y="24" width="5" height="1.6" fill="#569cd6"/><rect x="18" y="24" width="5" height="1.6" fill="#569cd6"/><rect x="24" y="24" width="3" height="1.6" fill="#6a9955"/><rect x="29" y="24" width="5" height="1.6" fill="#6a9955"/><rect x="35" y="24" width="11" height="1.6" fill="#6a9955"/><rect x="47" y="24" width="7" height="1.6" fill="#6a9955"/><rect x="55" y="24" width="8" height="1.6" fill="#6a9955"/><rect x="0" y="26" width="3" height="1.6" fill="#569cd6"/><rect x="4" y="26" width="8" height="1.6" fill="#b8b088"/><rect x="12" y="26" width="6" height="1.6" fill="#569cd6"/><rect x="19" y="26" width="3" height="1.6" fill="#569cd6"/><rect x="25" y="26" width="10" height="1.6" fill="#6a9955"/><rect x="36" y="26" width="4" height="1.6" fill="#6a9955"/><rect x="42" y="26" width="3" height="1.6" fill="#6a9955"/><rect x="46" y="26" width="6" height="1.6" fill="#6a9955"/><rect x="53" y="26" width="6" height="1.6" fill="#6a9955"/><rect x="60" y="26" width="3" height="1.6" fill="#6a9955"/><rect x="0" y="28" width="3" height="1.6" fill="#569cd6"/><rect x="7" y="28" width="5" height="1.6" fill="#b8b088"/><rect x="12" y="28" width="7" height="1.6" fill="#569cd6"/><rect x="20" y="28" width="3" height="1.6" fill="#569cd6"/><rect x="23" y="28" width="1" height="1.6" fill="#6a9955"/><rect x="25" y="28" width="19" height="1.6" fill="#6a9955"/><rect x="45" y="28" width="3" height="1.6" fill="#6a9955"/><rect x="50" y="28" width="6" height="1.6" fill="#6a9955"/><rect x="58" y="28" width="5" height="1.6" fill="#6a9955"/><rect x="0" y="30" width="3" height="1.6" fill="#569cd6"/><rect x="4" y="30" width="5" height="1.6" fill="#b8b088"/><rect x="10" y="30" width="2" height="1.6" fill="#b8b088"/><rect x="12" y="30" width="6" height="1.6" fill="#569cd6"/><rect x="19" y="30" width="4" height="1.6" fill="#569cd6"/><rect x="23" y="30" width="6" height="1.6" fill="#6a9955"/><rect x="30" y="30" width="4" height="1.6" fill="#6a9955"/><rect x="35" y="30" width="1" height="1.6" fill="#6a9955"/><rect x="37" y="30" width="10" height="1.6" fill="#6a9955"/><rect x="48" y="30" width="4" height="1.6" fill="#6a9955"/><rect x="53" y="30" width="5" height="1.6" fill="#6a9955"/><rect x="59" y="30" width="4" height="1.6" fill="#6a9955"/><rect x="0" y="32" width="3" height="1.6" fill="#569cd6"/><rect x="4" y="32" width="4" height="1.6" fill="#dcdcaa"/><rect x="8" y="32" width="2" height="1.6" fill="#d4d4d4"/><rect x="0" y="34" width="1" height="1.6" fill="#d4d4d4"/><rect x="4" y="36" width="3" height="1.6" fill="#569cd6"/><rect x="8" y="36" width="6" height="1.6" fill="#d4d4d4"/><rect x="14" y="36" width="1" height="1.6" fill="#d4d4d4"/><rect x="4" y="38" width="2" height="1.6" fill="#6a9955"/><rect x="7" y="38" width="6" height="1.6" fill="#6a9955"/><rect x="14" y="38" width="1" height="1.6" fill="#6a9955"/><rect x="16" y="38" width="12" height="1.6" fill="#6a9955"/><rect x="32" y="38" width="8" height="1.6" fill="#6a9955"/><rect x="41" y="38" width="1" height="1.6" fill="#6a9955"/><rect x="43" y="38" width="1" height="1.6" fill="#6a9955"/><rect x="45" y="38" width="1" height="1.6" fill="#6a9955"/><rect x="47" y="38" width="1" height="1.6" fill="#6a9955"/><rect x="49" y="38" width="1" height="1.6" fill="#6a9955"/><rect x="51" y="38" width="1" height="1.6" fill="#6a9955"/><rect x="4" y="40" width="2" height="1.6" fill="#6a9955"/><rect x="7" y="40" width="12" height="1.6" fill="#6a9955"/><rect x="20" y="40" width="6" height="1.6" fill="#6a9955"/><rect x="27" y="40" width="9" height="1.6" fill="#6a9955"/><rect x="37" y="40" width="8" height="1.6" fill="#6a9955"/><rect x="4" y="42" width="2" height="1.6" fill="#6a9955"/><rect x="7" y="42" width="6" height="1.6" fill="#6a9955"/><rect x="14" y="42" width="1" height="1.6" fill="#6a9955"/><rect x="16" y="42" width="10" height="1.6" fill="#6a9955"/><rect x="27" y="42" width="3" height="1.6" fill="#6a9955"/><rect x="34" y="42" width="8" height="1.6" fill="#6a9955"/><rect x="43" y="42" width="1" height="1.6" fill="#6a9955"/><rect x="45" y="42" width="1" height="1.6" fill="#6a9955"/><rect x="47" y="42" width="1" height="1.6" fill="#6a9955"/><rect x="49" y="42" width="1" height="1.6" fill="#6a9955"/><rect x="51" y="42" width="1" height="1.6" fill="#6a9955"/><rect x="53" y="42" width="1" height="1.6" fill="#6a9955"/><rect x="4" y="44" width="2" height="1.6" fill="#6a9955"/><rect x="7" y="44" width="12" height="1.6" fill="#6a9955"/><rect x="20" y="44" width="6" height="1.6" fill="#6a9955"/><rect x="27" y="44" width="9" height="1.6" fill="#6a9955"/><rect x="37" y="44" width="8" height="1.6" fill="#6a9955"/><rect x="4" y="46" width="2" height="1.6" fill="#6a9955"/><rect x="7" y="46" width="6" height="1.6" fill="#6a9955"/><rect x="14" y="46" width="1" height="1.6" fill="#6a9955"/><rect x="16" y="46" width="10" height="1.6" fill="#6a9955"/><rect x="27" y="46" width="3" height="1.6" fill="#6a9955"/><rect x="34" y="46" width="8" height="1.6" fill="#6a9955"/><rect x="43" y="46" width="1" height="1.6" fill="#6a9955"/><rect x="45" y="46" width="1" height="1.6" fill="#6a9955"/><rect x="47" y="46" width="1" height="1.6" fill="#6a9955"/><rect x="49" y="46" width="1" height="1.6" fill="#6a9955"/><rect x="51" y="46" width="1" height="1.6" fill="#6a9955"/><rect x="53" y="46" width="1" height="1.6" fill="#6a9955"/><rect x="4" y="48" width="2" height="1.6" fill="#6a9955"/><rect x="7" y="48" width="12" height="1.6" fill="#6a9955"/><rect x="20" y="48" width="6" height="1.6" fill="#6a9955"/><rect x="27" y="48" width="9" height="1.6" fill="#6a9955"/><rect x="37" y="48" width="8" height="1.6" fill="#6a9955"/><rect x="4" y="50" width="2" height="1.6" fill="#6a9955"/><rect x="7" y="50" width="6" height="1.6" fill="#6a9955"/><rect x="14" y="50" width="1" height="1.6" fill="#6a9955"/><rect x="16" y="50" width="13" height="1.6" fill="#6a9955"/><rect x="33" y="50" width="8" height="1.6" fill="#6a9955"/><rect x="42" y="50" width="1" height="1.6" fill="#6a9955"/><rect x="44" y="50" width="1" height="1.6" fill="#6a9955"/><rect x="46" y="50" width="1" height="1.6" fill="#6a9955"/><rect x="48" y="50" width="5" height="1.6" fill="#6a9955"/><rect x="54" y="50" width="1" height="1.6" fill="#6a9955"/><rect x="56" y="50" width="2" height="1.6" fill="#6a9955"/><rect x="4" y="54" width="2" height="1.6" fill="#6a9955"/><rect x="7" y="54" width="12" height="1.6" fill="#6a9955"/><rect x="20" y="54" width="6" height="1.6" fill="#6a9955"/><rect x="27" y="54" width="9" height="1.6" fill="#6a9955"/><rect x="37" y="54" width="8" height="1.6" fill="#6a9955"/><rect x="4" y="56" width="2" height="1.6" fill="#6a9955"/><rect x="7" y="56" width="6" height="1.6" fill="#6a9955"/><rect x="14" y="56" width="1" height="1.6" fill="#6a9955"/><rect x="16" y="56" width="10" height="1.6" fill="#6a9955"/><rect x="27" y="56" width="3" height="1.6" fill="#6a9955"/><rect x="34" y="56" width="8" height="1.6" fill="#6a9955"/><rect x="43" y="56" width="1" height="1.6" fill="#6a9955"/><rect x="45" y="56" width="1" height="1.6" fill="#6a9955"/><rect x="47" y="56" width="1" height="1.6" fill="#6a9955"/><rect x="49" y="56" width="1" height="1.6" fill="#6a9955"/><rect x="51" y="56" width="1" height="1.6" fill="#6a9955"/><rect x="53" y="56" width="1" height="1.6" fill="#6a9955"/><rect x="4" y="58" width="2" height="1.6" fill="#6a9955"/><rect x="7" y="58" width="12" height="1.6" fill="#6a9955"/><rect x="20" y="58" width="6" height="1.6" fill="#6a9955"/><rect x="27" y="58" width="9" height="1.6" fill="#6a9955"/><rect x="37" y="58" width="8" height="1.6" fill="#6a9955"/><rect x="4" y="60" width="2" height="1.6" fill="#6a9955"/><rect x="7" y="60" width="6" height="1.6" fill="#6a9955"/><rect x="14" y="60" width="1" height="1.6" fill="#6a9955"/><rect x="16" y="60" width="13" height="1.6" fill="#6a9955"/><rect x="33" y="60" width="8" height="1.6" fill="#6a9955"/><rect x="42" y="60" width="1" height="1.6" fill="#6a9955"/><rect x="44" y="60" width="1" height="1.6" fill="#6a9955"/><rect x="46" y="60" width="1" height="1.6" fill="#6a9955"/><rect x="48" y="60" width="5" height="1.6" fill="#6a9955"/><rect x="54" y="60" width="1" height="1.6" fill="#6a9955"/><rect x="56" y="60" width="2" height="1.6" fill="#6a9955"/><rect x="4" y="62" width="2" height="1.6" fill="#6a9955"/><rect x="7" y="62" width="12" height="1.6" fill="#6a9955"/><rect x="20" y="62" width="6" height="1.6" fill="#6a9955"/><rect x="27" y="62" width="9" height="1.6" fill="#6a9955"/><rect x="37" y="62" width="8" height="1.6" fill="#6a9955"/><rect x="4" y="64" width="2" height="1.6" fill="#6a9955"/><rect x="7" y="64" width="12" height="1.6" fill="#6a9955"/><rect x="20" y="64" width="6" height="1.6" fill="#6a9955"/><rect x="27" y="64" width="9" height="1.6" fill="#6a9955"/><rect x="37" y="64" width="8" height="1.6" fill="#6a9955"/><rect x="4" y="66" width="2" height="1.6" fill="#6a9955"/><rect x="7" y="66" width="6" height="1.6" fill="#6a9955"/><rect x="14" y="66" width="1" height="1.6" fill="#6a9955"/><rect x="16" y="66" width="12" height="1.6" fill="#6a9955"/><rect x="29" y="66" width="3" height="1.6" fill="#6a9955"/><rect x="36" y="66" width="8" height="1.6" fill="#6a9955"/><rect x="45" y="66" width="1" height="1.6" fill="#6a9955"/><rect x="47" y="66" width="1" height="1.6" fill="#6a9955"/><rect x="49" y="66" width="1" height="1.6" fill="#6a9955"/><rect x="51" y="66" width="17" height="1.6" fill="#6a9955"/><rect x="69" y="66" width="1" height="1.6" fill="#6a9955"/><rect x="71" y="66" width="2" height="1.6" fill="#6a9955"/><rect x="4" y="68" width="2" height="1.6" fill="#6a9955"/><rect x="7" y="68" width="12" height="1.6" fill="#6a9955"/><rect x="20" y="68" width="6" height="1.6" fill="#6a9955"/><rect x="27" y="68" width="9" height="1.6" fill="#6a9955"/><rect x="37" y="68" width="8" height="1.6" fill="#6a9955"/><rect x="4" y="72" width="2" height="1.6" fill="#6a9955"/><rect x="7" y="72" width="6" height="1.6" fill="#6a9955"/><rect x="14" y="72" width="1" height="1.6" fill="#6a9955"/><rect x="16" y="72" width="12" height="1.6" fill="#6a9955"/><rect x="32" y="72" width="8" height="1.6" fill="#6a9955"/><rect x="41" y="72" width="1" height="1.6" fill="#6a9955"/><rect x="43" y="72" width="1" height="1.6" fill="#6a9955"/><rect x="45" y="72" width="1" height="1.6" fill="#6a9955"/><rect x="47" y="72" width="1" height="1.6" fill="#6a9955"/><rect x="49" y="72" width="1" height="1.6" fill="#6a9955"/><rect x="51" y="72" width="4" height="1.6" fill="#6a9955"/><rect x="4" y="74" width="2" height="1.6" fill="#6a9955"/><rect x="7" y="74" width="12" height="1.6" fill="#6a9955"/><rect x="20" y="74" width="6" height="1.6" fill="#6a9955"/><rect x="27" y="74" width="9" height="1.6" fill="#6a9955"/><rect x="37" y="74" width="8" height="1.6" fill="#6a9955"/><rect x="4" y="76" width="2" height="1.6" fill="#6a9955"/><rect x="7" y="76" width="6" height="1.6" fill="#6a9955"/><rect x="14" y="76" width="1" height="1.6" fill="#6a9955"/><rect x="16" y="76" width="17" height="1.6" fill="#6a9955"/><rect x="37" y="76" width="8" height="1.6" fill="#6a9955"/><rect x="46" y="76" width="1" height="1.6" fill="#6a9955"/><rect x="48" y="76" width="4" height="1.6" fill="#6a9955"/><rect x="53" y="76" width="1" height="1.6" fill="#6a9955"/><rect x="55" y="76" width="6" height="1.6" fill="#6a9955"/><rect x="62" y="76" width="1" height="1.6" fill="#6a9955"/><rect x="64" y="76" width="4" height="1.6" fill="#6a9955"/><rect x="4" y="78" width="2" height="1.6" fill="#6a9955"/><rect x="7" y="78" width="12" height="1.6" fill="#6a9955"/><rect x="20" y="78" width="6" height="1.6" fill="#6a9955"/><rect x="27" y="78" width="9" height="1.6" fill="#6a9955"/><rect x="37" y="78" width="8" height="1.6" fill="#6a9955"/><rect x="4" y="80" width="2" height="1.6" fill="#6a9955"/><rect x="7" y="80" width="6" height="1.6" fill="#6a9955"/><rect x="14" y="80" width="1" height="1.6" fill="#6a9955"/><rect x="16" y="80" width="10" height="1.6" fill="#6a9955"/><rect x="27" y="80" width="3" height="1.6" fill="#6a9955"/><rect x="34" y="80" width="8" height="1.6" fill="#6a9955"/><rect x="43" y="80" width="1" height="1.6" fill="#6a9955"/><rect x="45" y="80" width="1" height="1.6" fill="#6a9955"/><rect x="47" y="80" width="1" height="1.6" fill="#6a9955"/><rect x="49" y="80" width="1" height="1.6" fill="#6a9955"/><rect x="51" y="80" width="1" height="1.6" fill="#6a9955"/><rect x="53" y="80" width="1" height="1.6" fill="#6a9955"/><rect x="4" y="82" width="2" height="1.6" fill="#6a9955"/><rect x="7" y="82" width="12" height="1.6" fill="#6a9955"/><rect x="20" y="82" width="6" height="1.6" fill="#6a9955"/><rect x="27" y="82" width="9" height="1.6" fill="#6a9955"/><rect x="37" y="82" width="8" height="1.6" fill="#6a9955"/><rect x="4" y="84" width="2" height="1.6" fill="#6a9955"/><rect x="7" y="84" width="6" height="1.6" fill="#6a9955"/><rect x="14" y="84" width="1" height="1.6" fill="#6a9955"/><rect x="16" y="84" width="10" height="1.6" fill="#6a9955"/><rect x="27" y="84" width="3" height="1.6" fill="#6a9955"/><rect x="34" y="84" width="8" height="1.6" fill="#6a9955"/><rect x="43" y="84" width="1" height="1.6" fill="#6a9955"/><rect x="45" y="84" width="1" height="1.6" fill="#6a9955"/><rect x="47" y="84" width="1" height="1.6" fill="#6a9955"/><rect x="49" y="84" width="1" height="1.6" fill="#6a9955"/><rect x="51" y="84" width="1" height="1.6" fill="#6a9955"/><rect x="53" y="84" width="1" height="1.6" fill="#6a9955"/><rect x="4" y="86" width="2" height="1.6" fill="#6a9955"/><rect x="7" y="86" width="12" height="1.6" fill="#6a9955"/><rect x="20" y="86" width="6" height="1.6" fill="#6a9955"/><rect x="27" y="86" width="9" height="1.6" fill="#6a9955"/><rect x="37" y="86" width="8" height="1.6" fill="#6a9955"/><rect x="4" y="90" width="2" height="1.6" fill="#6a9955"/><rect x="7" y="90" width="6" height="1.6" fill="#6a9955"/><rect x="14" y="90" width="1" height="1.6" fill="#6a9955"/><rect x="16" y="90" width="16" height="1.6" fill="#6a9955"/><rect x="36" y="90" width="8" height="1.6" fill="#6a9955"/><rect x="45" y="90" width="1" height="1.6" fill="#6a9955"/><rect x="47" y="90" width="6" height="1.6" fill="#6a9955"/><rect x="54" y="90" width="1" height="1.6" fill="#6a9955"/><rect x="56" y="90" width="6" height="1.6" fill="#6a9955"/><rect x="63" y="90" width="1" height="1.6" fill="#6a9955"/><rect x="65" y="90" width="1" height="1.6" fill="#6a9955"/><rect x="4" y="92" width="2" height="1.6" fill="#6a9955"/><rect x="7" y="92" width="12" height="1.6" fill="#6a9955"/><rect x="20" y="92" width="6" height="1.6" fill="#6a9955"/><rect x="27" y="92" width="9" height="1.6" fill="#6a9955"/><rect x="37" y="92" width="8" height="1.6" fill="#6a9955"/><rect x="4" y="94" width="2" height="1.6" fill="#6a9955"/><rect x="7" y="94" width="6" height="1.6" fill="#6a9955"/><rect x="14" y="94" width="1" height="1.6" fill="#6a9955"/><rect x="16" y="94" width="14" height="1.6" fill="#6a9955"/><rect x="31" y="94" width="8" height="1.6" fill="#6a9955"/><rect x="43" y="94" width="8" height="1.6" fill="#6a9955"/><rect x="52" y="94" width="1" height="1.6" fill="#6a9955"/><rect x="54" y="94" width="6" height="1.6" fill="#6a9955"/><rect x="61" y="94" width="1" height="1.6" fill="#6a9955"/><rect x="63" y="94" width="6" height="1.6" fill="#6a9955"/><rect x="70" y="94" width="1" height="1.6" fill="#6a9955"/><rect x="72" y="94" width="6" height="1.6" fill="#6a9955"/><rect x="4" y="96" width="2" height="1.6" fill="#6a9955"/><rect x="7" y="96" width="12" height="1.6" fill="#6a9955"/><rect x="20" y="96" width="6" height="1.6" fill="#6a9955"/><rect x="27" y="96" width="9" height="1.6" fill="#6a9955"/><rect x="37" y="96" width="8" height="1.6" fill="#6a9955"/><rect x="4" y="100" width="6" height="1.6" fill="#d4d4d4"/><rect x="11" y="100" width="1" height="1.6" fill="#d4d4d4"/><rect x="13" y="100" width="15" height="1.6" fill="#d4d4d4"/><rect x="32" y="100" width="8" height="1.6" fill="#6a9955"/><rect x="41" y="100" width="1" height="1.6" fill="#6a9955"/><rect x="43" y="100" width="4" height="1.6" fill="#6a9955"/><rect x="48" y="100" width="1" height="1.6" fill="#6a9955"/><rect x="50" y="100" width="4" height="1.6" fill="#6a9955"/><rect x="55" y="100" width="1" height="1.6" fill="#6a9955"/><rect x="57" y="100" width="1" height="1.6" fill="#6a9955"/><rect x="4" y="102" width="7" height="1.6" fill="#dcdcaa"/><rect x="11" y="102" width="5" height="1.6" fill="#ce9178"/><rect x="17" y="102" width="6" height="1.6" fill="#ce9178"/><rect x="24" y="102" width="8" height="1.6" fill="#ce9178"/><rect x="32" y="102" width="1" height="1.6" fill="#d4d4d4"/><rect x="34" y="102" width="8" height="1.6" fill="#d4d4d4"/><rect x="4" y="104" width="6" height="1.6" fill="#d4d4d4"/><rect x="11" y="104" width="1" height="1.6" fill="#d4d4d4"/><rect x="13" y="104" width="15" height="1.6" fill="#d4d4d4"/><rect x="29" y="104" width="8" height="1.6" fill="#d4d4d4"/><rect x="41" y="104" width="8" height="1.6" fill="#6a9955"/><rect x="50" y="104" width="1" height="1.6" fill="#6a9955"/><rect x="52" y="104" width="1" height="1.6" fill="#6a9955"/><rect x="54" y="104" width="1" height="1.6" fill="#6a9955"/><rect x="56" y="104" width="6" height="1.6" fill="#6a9955"/><rect x="63" y="104" width="1" height="1.6" fill="#6a9955"/><rect x="65" y="104" width="6" height="1.6" fill="#6a9955"/><rect x="4" y="106" width="7" height="1.6" fill="#dcdcaa"/><rect x="11" y="106" width="5" height="1.6" fill="#ce9178"/><rect x="17" y="106" width="6" height="1.6" fill="#ce9178"/><rect x="24" y="106" width="8" height="1.6" fill="#ce9178"/><rect x="32" y="106" width="1" height="1.6" fill="#d4d4d4"/><rect x="34" y="106" width="8" height="1.6" fill="#d4d4d4"/><rect x="4" y="108" width="6" height="1.6" fill="#c586c0"/><rect x="11" y="108" width="2" height="1.6" fill="#b5cea8"/><rect x="0" y="110" width="1" height="1.6" fill="#d4d4d4"/></svg>
<div class="a" style="left:1785px;top:130px;width:2px;height:32px;background:#3d6a96;opacity:0.8"></div>
<div class="a" style="left:536px;top:704px;width:1374px;height:1px;background:#404040;"></div>
<div class="t" style="left:556px;top:715px;font-size:11px;line-height:14px;color:#9d9d9d;">问题</div>
<div class="t" style="left:600px;top:715px;font-size:11px;line-height:14px;color:#9d9d9d;">输出</div>
<div class="t" style="left:647px;top:715px;font-size:11px;line-height:14px;color:#9d9d9d;">调试控制台</div>
<div class="t" style="left:724px;top:715px;font-size:11px;line-height:14px;color:#e7e7e7;">终端</div>
<div class="a" style="left:722px;top:732px;width:26px;height:1.5px;background:#e7e7e7;"></div>
<svg style="left:1823.5px;top:715.5px" width="14" height="14"><path d="M7 0.5v13M0.5 7h13" stroke="#d0d0d0" stroke-width="1.1"/></svg>
<svg style="left:1842.5px;top:720px" width="9" height="6"><path d="M0.5 0.8l4 4 4-4" fill="none" stroke="#c5c5c5" stroke-width="1.1"/></svg>
<svg style="left:1864px;top:718.5px" width="11" height="7"><path d="M0.7 5.3l4.5-4.3L9.7 5.3" fill="none" stroke="#c5c5c5" stroke-width="1.3"/></svg>
<svg style="left:1886.5px;top:717.3px" width="10" height="10"><path d="M0.6 0.6l8.2 8.2M8.8 0.6L0.6 8.8" stroke="#c5c5c5" stroke-width="1.3"/></svg>
<div class="a" style="left:1710px;top:737px;width:1px;height:249px;background:#3c3c3c;"></div>
<svg style="left:1721px;top:743px" width="15" height="15"><rect x="0.6" y="0.6" width="13.8" height="13.8" rx="1" fill="none" stroke="#c5c5c5" stroke-width="1.1"/><path d="M5 4l3.5 3.5L5 11" fill="none" stroke="#c5c5c5" stroke-width="1.1"/></svg>
<div class="t" style="left:1740px;top:742px;font-size:13px;line-height:16px;color:#cccccc;">bash</div>
<div class="a" style="left:1711px;top:761px;width:199px;height:22px;background:#37373d;"></div>
<svg style="left:1721px;top:765px" width="16" height="16"><path d="M1.5 1.5l1.5-0.3 6.5 6.5-1.2 1.2L1.8 2.4z" fill="none" stroke="#c5c5c5" stroke-width="1.2" stroke-linejoin="round"/><path d="M9 9.5l4 4" stroke="#c5c5c5" stroke-width="2.6" stroke-linecap="round"/><path d="M2.5 13.5l6.5-6.5" stroke="#c5c5c5" stroke-width="2.2" stroke-linecap="round"/><path d="M9.2 6.8a3.2 3.2 0 0 1 3.8-5.3l-2 2 0.4 1.3 1.3 0.4 2-2a3.2 3.2 0 0 1-5.3 3.8" fill="none" stroke="#c5c5c5" stroke-width="1.2"/></svg>
<div class="t" style="left:1740px;top:764px;font-size:13px;line-height:16px;color:#cccccc;letter-spacing:-0.6px">Run RISCV-QEMU</div>
<div class="t" style="left:1848px;top:765px;font-size:11.5px;line-height:15px;color:#9d9d9d;">Task</div>
<svg style="left:1885px;top:766px" width="14" height="12"><path d="M1 6.5l4 4L13 1.5" fill="none" stroke="#c5c5c5" stroke-width="1.2"/></svg>
<div class="t mono" style="left:555.7px;top:748.10px;font-size:13.2px;line-height:15.833px;color:#cccccc;">CC -[M] <span style="display:inline-block;width:15.84px;text-align:center">正</span><span style="display:inline-block;width:15.84px;text-align:center">在</span><span style="display:inline-block;width:15.84px;text-align:center">构</span><span style="display:inline-block;width:15.84px;text-align:center">建</span>... main.c</div>
<div class="t mono" style="left:555.7px;top:763.93px;font-size:13.2px;line-height:15.833px;color:#cccccc;">CC -[M] <span style="display:inline-block;width:15.84px;text-align:center">正</span><span style="display:inline-block;width:15.84px;text-align:center">在</span><span style="display:inline-block;width:15.84px;text-align:center">构</span><span style="display:inline-block;width:15.84px;text-align:center">建</span>... main.elf</div>
<div class="t mono" style="left:555.7px;top:779.77px;font-size:13.2px;line-height:15.833px;color:#cccccc;">CC -[M] <span style="display:inline-block;width:15.84px;text-align:center">正</span><span style="display:inline-block;width:15.84px;text-align:center">在</span><span style="display:inline-block;width:15.84px;text-align:center">构</span><span style="display:inline-block;width:15.84px;text-align:center">建</span>... addsub.o</div>
<div class="t mono" style="left:555.7px;top:795.60px;font-size:13.2px;line-height:15.833px;color:#cccccc;">CC -[M] <span style="display:inline-block;width:15.84px;text-align:center">正</span><span style="display:inline-block;width:15.84px;text-align:center">在</span><span style="display:inline-block;width:15.84px;text-align:center">构</span><span style="display:inline-block;width:15.84px;text-align:center">建</span>... and.o</div>
<div class="t mono" style="left:555.7px;top:811.43px;font-size:13.2px;line-height:15.833px;color:#cccccc;">CC -[M] <span style="display:inline-block;width:15.84px;text-align:center">正</span><span style="display:inline-block;width:15.84px;text-align:center">在</span><span style="display:inline-block;width:15.84px;text-align:center">构</span><span style="display:inline-block;width:15.84px;text-align:center">建</span>... addi.o</div>
<div class="t mono" style="left:555.7px;top:827.26px;font-size:13.2px;line-height:15.833px;color:#cccccc;">CC -[M] <span style="display:inline-block;width:15.84px;text-align:center">正</span><span style="display:inline-block;width:15.84px;text-align:center">在</span><span style="display:inline-block;width:15.84px;text-align:center">构</span><span style="display:inline-block;width:15.84px;text-align:center">建</span>... slti.o</div>
<div class="t mono" style="left:555.7px;top:843.10px;font-size:13.2px;line-height:15.833px;color:#cccccc;">CC -[M] <span style="display:inline-block;width:15.84px;text-align:center">正</span><span style="display:inline-block;width:15.84px;text-align:center">在</span><span style="display:inline-block;width:15.84px;text-align:center">构</span><span style="display:inline-block;width:15.84px;text-align:center">建</span>... main.o</div>
<div class="t mono" style="left:555.7px;top:874.76px;font-size:13.2px;line-height:15.833px;color:#cccccc;font-weight:bold;"><span style="display:inline-block;width:15.84px;text-align:center">终</span><span style="display:inline-block;width:15.84px;text-align:center">端</span><span style="display:inline-block;width:15.84px;text-align:center">将</span><span style="display:inline-block;width:15.84px;text-align:center">被</span><span style="display:inline-block;width:15.84px;text-align:center">任</span><span style="display:inline-block;width:15.84px;text-align:center">务</span><span style="display:inline-block;width:15.84px;text-align:center">重</span><span style="display:inline-block;width:15.84px;text-align:center">用</span><span style="display:inline-block;width:15.84px;text-align:center">，</span><span style="display:inline-block;width:15.84px;text-align:center">按</span><span style="display:inline-block;width:15.84px;text-align:center">任</span><span style="display:inline-block;width:15.84px;text-align:center">意</span><span style="display:inline-block;width:15.84px;text-align:center">键</span><span style="display:inline-block;width:15.84px;text-align:center">关</span><span style="display:inline-block;width:15.84px;text-align:center">闭</span><span style="display:inline-block;width:15.84px;text-align:center">。</span></div>
<div class="t mono" style="left:555.7px;top:906.43px;font-size:13.2px;line-height:15.833px;color:#cccccc;font-weight:bold;">&gt; Executing task: echo Starting RISCV-QEMU&amp;qemu-riscv32 -g 1234 ./*.elf &lt;</div>
<div class="t mono" style="left:555.7px;top:938.10px;font-size:13.2px;line-height:15.833px;color:#cccccc;">Starting RISCV-QEMU</div>
<div class="t mono" style="left:555.7px;top:953.93px;font-size:13.2px;line-height:15.833px;color:#cccccc;">This result is:ff</div>
<div class="a" style="left:540px;top:469px;width:786px;height:41px;background:transparent;border:5px solid #fc1b4d"></div>
<div class="a" style="left:541px;top:945.5px;width:787.5px;height:33.5px;background:transparent;border:5px solid #fc1b4d"></div>
<div class="a" style="left:10px;top:986px;width:1900px;height:22px;background:#cc6633;"></div>
<div class="a" style="left:10px;top:986px;width:34px;height:22px;background:#16825d;"></div>
<svg style="left:20px;top:990px" width="14" height="14"><path d="M2 6.5l4 3-4 3.5M11.5 1.5l-4 3.5 4 3" fill="none" stroke="#fff" stroke-width="1.2"/></svg>
<svg style="left:52px;top:991px" width="13" height="13"><circle cx="6.5" cy="6.5" r="5.6" fill="none" stroke="#fff" stroke-width="1.1"/><path d="M4 4l5 5M9 4l-5 5" stroke="#fff" stroke-width="1.1"/></svg>
<div class="t" style="left:67px;top:989.7px;font-size:12px;line-height:16px;color:#ffffff;">0</div>
<svg style="left:77px;top:990px" width="14" height="13"><path d="M7 1L13 12H1z" fill="none" stroke="#fff" stroke-width="1.1" stroke-linejoin="round"/><path d="M7 5v3.5M7 10v1" stroke="#fff" stroke-width="1.1"/></svg>
<div class="t" style="left:93px;top:989.7px;font-size:12px;line-height:16px;color:#ffffff;">0</div>
<svg style="left:116px;top:990px" width="15" height="15"><path d="M1.5 1.5l1.5-0.3 6 6-1.2 1.2L1.8 2.4z" fill="none" stroke="#fff" stroke-width="1.1" stroke-linejoin="round"/><path d="M8.5 9l3.5 3.5" stroke="#fff" stroke-width="2.4" stroke-linecap="round"/><path d="M2.5 12.5l6-6" stroke="#fff" stroke-width="2" stroke-linecap="round"/><path d="M8.7 6.3a3 3 0 0 1 3.5-4.8l-1.8 1.8 0.4 1.2 1.2 0.4 1.8-1.8a3 3 0 0 1-4.8 3.5" fill="none" stroke="#fff" stroke-width="1.1"/></svg>
<div class="t" style="left:132px;top:989.7px;font-size:12px;line-height:16px;color:#ffffff;">1</div>
<svg style="left:154px;top:990px" width="15" height="14"><path d="M6 1l8 5-6 3.5" fill="none" stroke="#fff" stroke-width="1.1" stroke-linejoin="round"/><path d="M6 1v5" stroke="#fff" stroke-width="1.1"/><circle cx="4.5" cy="10" r="2.6" fill="none" stroke="#fff" stroke-width="1.1"/></svg>
<div class="t" style="left:171.5px;top:989.7px;font-size:12px;line-height:16px;color:#ffffff;">(gdb) 启动 (16)</div>
<svg style="left:1548px;top:990px" width="11" height="14"><path d="M5.5 1c0 3-4 4.5-4 8a4 4 0 0 0 8 0c0-2-1-3-2-4 0 2-1 3-2 3 0-2 1-4 0-7z" fill="none" stroke="#fff" stroke-width="1.1"/></svg>
<div class="t" style="left:1575.4px;top:989.7px;font-size:12px;line-height:16px;color:#ffffff;">行 53，列 1</div>
<div class="t" style="left:1652px;top:989.7px;font-size:12px;line-height:16px;color:#ffffff;">空格: 4</div>
<div class="t" style="left:1704.8px;top:989.7px;font-size:12px;line-height:16px;color:#ffffff;">UTF-8</div>
<div class="t" style="left:1753px;top:989.7px;font-size:12px;line-height:16px;color:#ffffff;">LF</div>
<div class="t" style="left:1782px;top:989.7px;font-size:12px;line-height:16px;color:#ffffff;">C</div>
<div class="t" style="left:1805px;top:989.7px;font-size:12px;line-height:16px;color:#ffffff;">Linux</div>
<svg style="left:1852px;top:990px" width="14" height="14"><circle cx="5" cy="4.5" r="3" fill="none" stroke="#fff" stroke-width="1.1"/><path d="M0.8 13c0.5-3 2-4.5 4.2-4.5M7 8.5l3-7h3.5l-3 7zM8 5h5" fill="none" stroke="#fff" stroke-width="1.1"/></svg>
<svg style="left:1881px;top:989px" width="15" height="15"><path d="M2 11.5h10M3.5 11.5V7a3.5 3.5 0 0 1 7 0v4.5M5.5 13.5h3" fill="none" stroke="#fff" stroke-width="1.1"/><circle cx="11.5" cy="3" r="2.5" fill="#fff"/></svg>
</body></html>
